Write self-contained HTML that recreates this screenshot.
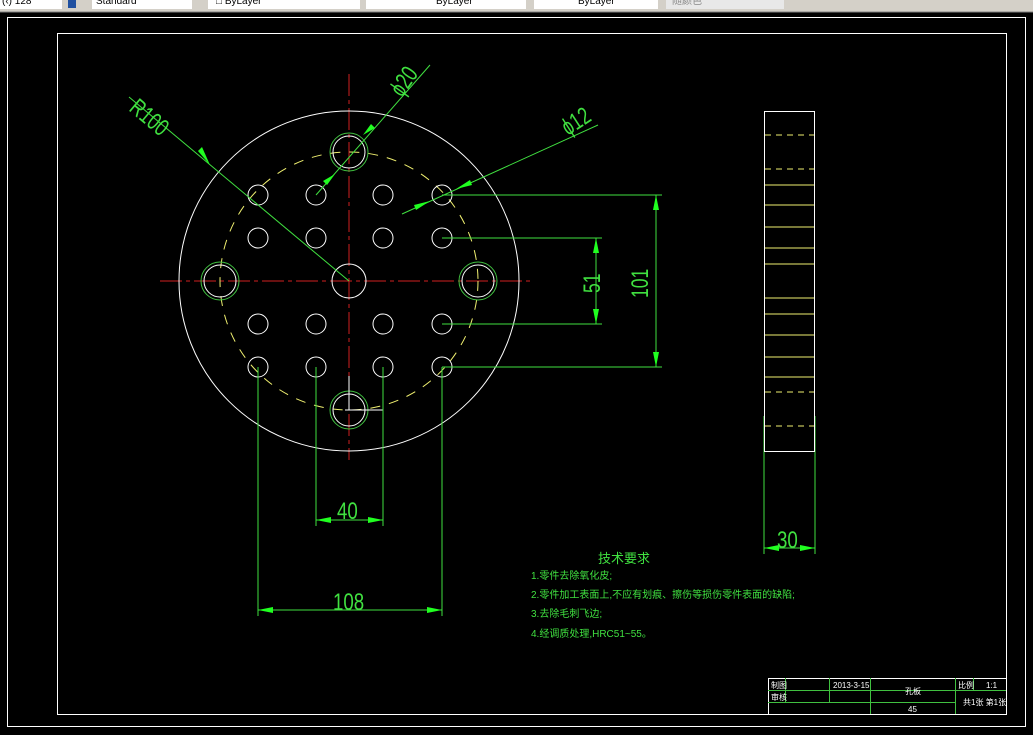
<!DOCTYPE html>
<html><head><meta charset="utf-8"><style>
html,body{margin:0;padding:0;background:#000;width:1033px;height:735px;overflow:hidden}
svg{display:block}
</style></head><body>
<svg width="1033" height="735" viewBox="0 0 1033 735" xmlns="http://www.w3.org/2000/svg" font-family="Liberation Sans, sans-serif">
<rect x="0" y="0" width="1033" height="735" fill="#000"/>
<!-- toolbar -->
<rect x="0" y="0" width="1033" height="12" fill="#d4d0c8"/>
<line x1="0" y1="12" x2="1033" y2="12" stroke="#808080"/>
<g font-size="10" fill="#000">
<rect x="0" y="0" width="62" height="9" fill="#fff"/><text x="2" y="4">(‹) 128</text>
<rect x="68" y="0" width="8" height="8" fill="#2050a0"/>
<rect x="92" y="0" width="100" height="9" fill="#fff"/><text x="96" y="4">Standard</text>
<rect x="208" y="0" width="152" height="9" fill="#fff"/><text x="216" y="4">□ ByLayer</text>
<rect x="366" y="0" width="160" height="9" fill="#fff"/><text x="436" y="4">ByLayer</text>
<rect x="534" y="0" width="124" height="9" fill="#fff"/><text x="578" y="4">ByLayer</text>
<rect x="666" y="0" width="118" height="9" fill="#e8e8e8"/><text x="672" y="4" fill="#888">随颜色</text>
</g>
<!-- frames -->
<rect x="7.5" y="17.5" width="1018" height="709" fill="none" stroke="#fff"/>
<rect x="57.5" y="33.5" width="949" height="681" fill="none" stroke="#fff"/>
<!-- centerlines -->
<g stroke="#d02020" stroke-width="1" stroke-dasharray="22,4,4,4">
<line x1="349" y1="74" x2="349" y2="460"/>
<line x1="160" y1="281" x2="530" y2="281"/>
</g>
<circle cx="349" cy="281" r="170" fill="none" stroke="#fff"/>
<circle cx="349" cy="281" r="129" fill="none" stroke="#f0f070" stroke-dasharray="10,9"/>
<g fill="none">
<circle cx="349" cy="152" r="16" stroke="#fff"/><circle cx="349" cy="152" r="19" stroke="#40c040"/>
<circle cx="220" cy="281" r="16" stroke="#fff"/><circle cx="220" cy="281" r="19" stroke="#40c040"/>
<circle cx="478" cy="281" r="16" stroke="#fff"/><circle cx="478" cy="281" r="19" stroke="#40c040"/>
<circle cx="349" cy="410" r="16" stroke="#fff"/><circle cx="349" cy="410" r="19" stroke="#40c040"/>
<circle cx="349" cy="281" r="17" stroke="#fff"/>
</g>
<g fill="none" stroke="#fff">
<circle cx="258" cy="195" r="10"/><circle cx="316" cy="195" r="10"/><circle cx="383" cy="195" r="10"/><circle cx="442" cy="195" r="10"/>
<circle cx="258" cy="238" r="10"/><circle cx="316" cy="238" r="10"/><circle cx="383" cy="238" r="10"/><circle cx="442" cy="238" r="10"/>
<circle cx="258" cy="324" r="10"/><circle cx="316" cy="324" r="10"/><circle cx="383" cy="324" r="10"/><circle cx="442" cy="324" r="10"/>
<circle cx="258" cy="367" r="10"/><circle cx="316" cy="367" r="10"/><circle cx="383" cy="367" r="10"/><circle cx="442" cy="367" r="10"/>
<line x1="349" y1="376" x2="349" y2="410"/><line x1="345" y1="410" x2="383" y2="410"/>
</g>
<g stroke="#40e040" fill="none" stroke-width="1">
<line x1="129" y1="97" x2="349" y2="281"/>
<line x1="430" y1="65" x2="316" y2="195"/>
<line x1="598" y1="125" x2="402" y2="214"/>
<line x1="442" y1="195" x2="662" y2="195"/><line x1="442" y1="367" x2="662" y2="367"/>
<line x1="656" y1="195" x2="656" y2="367"/>
<line x1="442" y1="238" x2="602" y2="238"/><line x1="442" y1="324" x2="602" y2="324"/>
<line x1="596" y1="238" x2="596" y2="324"/>
<line x1="316" y1="367" x2="316" y2="526"/><line x1="383" y1="367" x2="383" y2="526"/>
<line x1="316" y1="520" x2="383" y2="520"/>
<line x1="258" y1="367" x2="258" y2="616"/><line x1="442" y1="367" x2="442" y2="616"/>
<line x1="258" y1="610" x2="442" y2="610"/>
<line x1="764" y1="416" x2="764" y2="554"/><line x1="815" y1="416" x2="815" y2="554"/>
<line x1="764" y1="548" x2="815" y2="548"/>
</g>
<g fill="#20ff20">
<polygon points="656,195 653,210 659,210"/><polygon points="656,367 653,352 659,352"/>
<polygon points="596,238 593,253 599,253"/><polygon points="596,324 593,309 599,309"/>
<polygon points="316,520 331,517 331,523"/><polygon points="383,520 368,517 368,523"/>
<polygon points="258,610 273,607 273,613"/><polygon points="442,610 427,607 427,613"/>
<polygon points="764,548 779,545 779,551"/><polygon points="815,548 800,545 800,551"/>
<polygon points="210,165 198,151 202,147"/>
<polygon points="363,135 371,124 375,128"/><polygon points="335,174 327,185 323,181"/>
<polygon points="456,189 470,180 472,185"/><polygon points="430,201 416,210 414,205"/>
</g>
<g fill="#40e040" font-size="22" font-family="Liberation Sans Narrow, Liberation Sans, sans-serif" font-weight="normal">
<text x="0" y="0" transform="translate(648,298) rotate(-90) scale(0.8,1.1)">101</text>
<text x="0" y="0" transform="translate(600,293) rotate(-90) scale(0.8,1.1)">51</text>
<text x="0" y="0" transform="translate(337,519) scale(0.85,1.1)">40</text>
<text x="0" y="0" transform="translate(333,610) scale(0.85,1.1)">108</text>
<text x="0" y="0" transform="translate(777,548) scale(0.85,1.1)">30</text>
<text x="0" y="0" transform="translate(128,110) rotate(40) scale(0.8,1.1)">R100</text>
<text x="0" y="0" transform="translate(402,98) rotate(-55) scale(0.8,1.1)">ϕ20</text>
<text x="0" y="0" transform="translate(568,136) rotate(-33) scale(0.8,1.1)">ϕ12</text>
</g>
<rect x="764.5" y="111.5" width="50" height="340" fill="none" stroke="#fff"/>
<g stroke="#f0f070">
<g stroke-dasharray="6,5"><line x1="765" y1="135" x2="814" y2="135"/><line x1="765" y1="169" x2="814" y2="169"/><line x1="765" y1="392" x2="814" y2="392"/><line x1="765" y1="426" x2="814" y2="426"/></g>
<line x1="765" y1="185" x2="814" y2="185"/><line x1="765" y1="205" x2="814" y2="205"/><line x1="765" y1="227" x2="814" y2="227"/><line x1="765" y1="248" x2="814" y2="248"/><line x1="765" y1="264" x2="814" y2="264"/><line x1="765" y1="298" x2="814" y2="298"/><line x1="765" y1="314" x2="814" y2="314"/><line x1="765" y1="335" x2="814" y2="335"/><line x1="765" y1="357" x2="814" y2="357"/><line x1="765" y1="377" x2="814" y2="377"/>
</g>
<g fill="#40e040" font-family="Liberation Sans, Noto Sans CJK SC, sans-serif">
<text x="598" y="563" font-size="13">技术要求</text>
<g font-size="10">
<text x="531" y="579">1.零件去除氧化皮;</text>
<text x="531" y="598">2.零件加工表面上,不应有划痕、擦伤等损伤零件表面的缺陷;</text>
<text x="531" y="617">3.去除毛刺飞边;</text>
<text x="531" y="637">4.经调质处理,HRC51~55。</text>
</g>
</g>
<rect x="768.5" y="678.5" width="238" height="36" fill="none" stroke="#fff"/>
<g stroke="#40c040">
<line x1="768" y1="690.5" x2="1006" y2="690.5"/><line x1="768" y1="702.5" x2="955" y2="702.5"/>
<line x1="785.5" y1="678" x2="785.5" y2="702"/><line x1="829.5" y1="678" x2="829.5" y2="702"/>
<line x1="870.5" y1="678" x2="870.5" y2="714"/><line x1="955.5" y1="678" x2="955.5" y2="714"/>
<line x1="973.5" y1="678" x2="973.5" y2="690"/>
</g>
<g fill="#fff" font-size="8" font-family="Liberation Sans, Noto Sans CJK SC, sans-serif">
<text x="771" y="688">制图</text><text x="771" y="700">审核</text>
<text x="833" y="688">2013-3-15</text>
<text x="905" y="694">孔板</text>
<text x="908" y="712">45</text>
<text x="958" y="688">比例</text><text x="986" y="688">1:1</text>
<text x="963" y="705">共1张 第1张</text>
</g>
</svg>
</body></html>
